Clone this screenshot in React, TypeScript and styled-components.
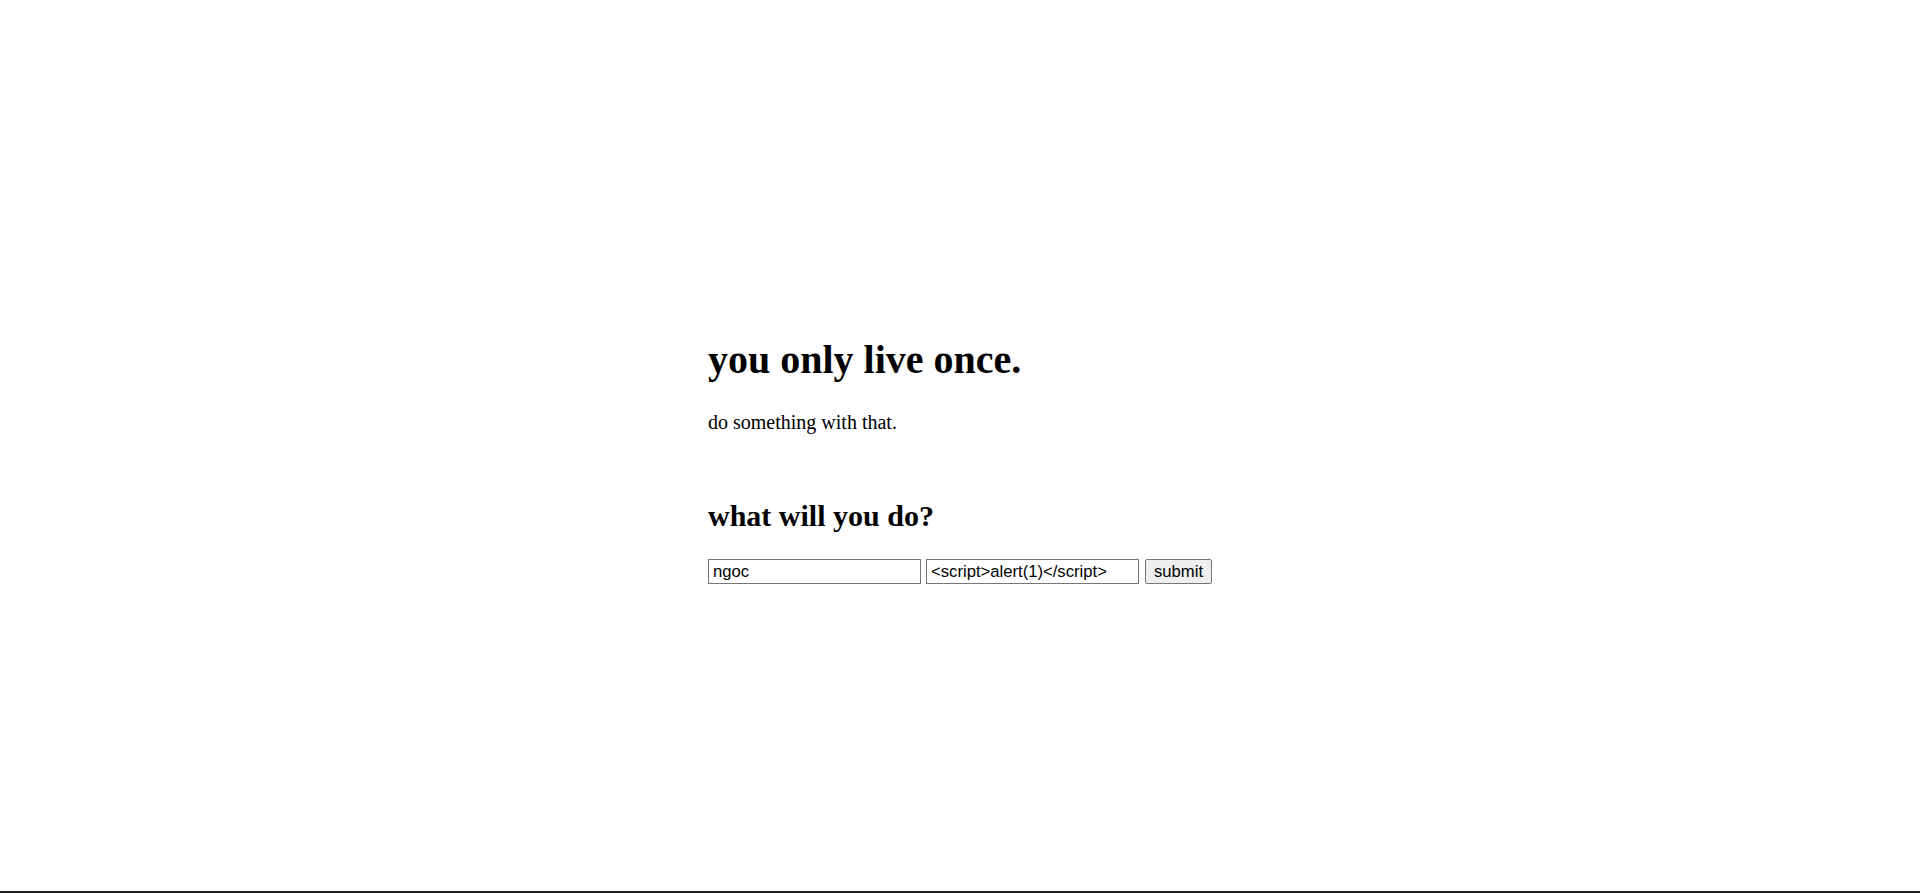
import React from "react";
import styled, { createGlobalStyle } from "styled-components";

const GlobalStyle = createGlobalStyle`
  html, body {
    margin: 0;
    padding: 0;
    background: #ffffff;
  }
  body {
    font-family: "Liberation Serif", "Times New Roman", serif;
    color: #000000;
  }
`;

const Page = styled.div`
  display: flex;
  flex-direction: column;
  min-height: 100vh;
  box-sizing: border-box;
`;

const Main = styled.main`
  flex: 1;
  display: flex;
  align-items: center;
  justify-content: center;
  padding-top: 29px;
`;

const Content = styled.div`
  display: flex;
  flex-direction: column;
  align-items: flex-start;
`;

const Title = styled.h1`
  margin: 0 0 27px;
  font-size: 40px;
  font-weight: 700;
  line-height: normal;
`;

const Lead = styled.p`
  margin: 1px 0 0;
  font-size: 20px;
  line-height: normal;
`;

const Subtitle = styled.h2`
  margin: 65px 0 26px;
  font-size: 30px;
  font-weight: 700;
  line-height: normal;
`;

const Form = styled.form`
  display: flex;
  align-items: center;
  gap: 5px;
  margin: 0;
`;

const Field = styled.input`
  box-sizing: border-box;
  width: 213px;
  height: 25px;
  margin: 0;
  padding: 1px 4px;
  border: 1px solid #767676;
  border-radius: 0;
  background: #ffffff;
  color: #000000;
  font-family: "Liberation Sans", Arial, sans-serif;
  font-size: 16.67px;
  outline: none;
`;

const SubmitButton = styled.button`
  box-sizing: border-box;
  width: 67px;
  height: 25px;
  margin: 0 0 0 1px;
  padding: 1px 7px;
  border: 1px solid #767676;
  border-radius: 2px;
  background: #efefef;
  color: #000000;
  font-family: "Liberation Sans", Arial, sans-serif;
  font-size: 16.67px;
  cursor: pointer;
`;

const BottomBar = styled.div`
  height: 2px;
  background: #1e1e1e;
`;

export default function App() {
  return (
    <>
      <GlobalStyle />
      <Page>
        <Main>
          <Content>
            <Title>you only live once.</Title>
            <Lead>do something with that.</Lead>
            <Subtitle>what will you do?</Subtitle>
            <Form onSubmit={(e) => e.preventDefault()}>
              <Field type="text" defaultValue="ngoc" />
              <Field type="text" defaultValue="<script>alert(1)</script>" />
              <SubmitButton type="submit">submit</SubmitButton>
            </Form>
          </Content>
        </Main>
        <BottomBar />
      </Page>
    </>
  );
}
